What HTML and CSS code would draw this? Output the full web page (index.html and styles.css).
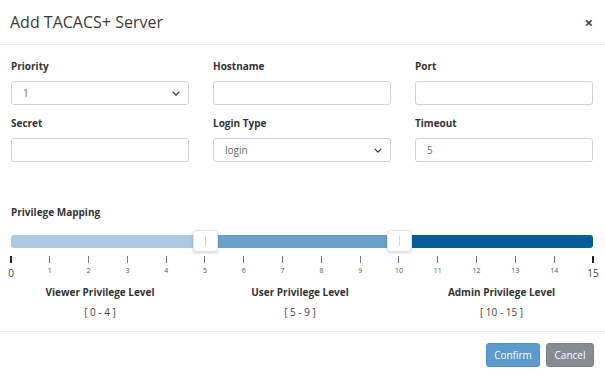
FILE: index.html
```html
<!DOCTYPE html>
<html>
<head>
<meta charset="utf-8">
<link rel="stylesheet" href="styles.css">
</head>
<body>
<div class="modal">
  <div class="modal-header">
    <h4 class="title">Add TACACS+ Server</h4>
    <span class="close">&times;</span>
  </div>
  <div class="modal-body">
    <div class="form-grid">
      <div class="field">
        <label>Priority</label>
        <div class="control select"><span>1</span><svg class="chev" viewBox="0 0 10 6" width="8" height="5"><path d="M1 1 L5 5 L9 1" fill="none" stroke="#333" stroke-width="1.6"/></svg></div>
      </div>
      <div class="field">
        <label>Hostname</label>
        <div class="control"></div>
      </div>
      <div class="field">
        <label>Port</label>
        <div class="control"></div>
      </div>
      <div class="field">
        <label>Secret</label>
        <div class="control"></div>
      </div>
      <div class="field">
        <label>Login Type</label>
        <div class="control select"><span>login</span><svg class="chev" viewBox="0 0 10 6" width="8" height="5"><path d="M1 1 L5 5 L9 1" fill="none" stroke="#333" stroke-width="1.6"/></svg></div>
      </div>
      <div class="field">
        <label>Timeout</label>
        <div class="control"><span>5</span></div>
      </div>
    </div>

    <div class="mapping">
      <label class="map-label">Privilege Mapping</label>
      <div class="slider">
        <div class="track">
          <div class="seg seg-viewer"></div>
          <div class="seg seg-user"></div>
          <div class="seg seg-admin"></div>
        </div>
        <div class="handle" style="left: 33.33%"></div>
        <div class="handle" style="left: 66.67%"></div>
      </div>
      <div class="ticks">
        <div class="tick major"><i></i><b>0</b></div>
        <div class="tick"><i></i><b>1</b></div>
        <div class="tick"><i></i><b>2</b></div>
        <div class="tick"><i></i><b>3</b></div>
        <div class="tick"><i></i><b>4</b></div>
        <div class="tick"><i></i><b>5</b></div>
        <div class="tick"><i></i><b>6</b></div>
        <div class="tick"><i></i><b>7</b></div>
        <div class="tick"><i></i><b>8</b></div>
        <div class="tick"><i></i><b>9</b></div>
        <div class="tick"><i></i><b>10</b></div>
        <div class="tick"><i></i><b>11</b></div>
        <div class="tick"><i></i><b>12</b></div>
        <div class="tick"><i></i><b>13</b></div>
        <div class="tick"><i></i><b>14</b></div>
        <div class="tick major"><i></i><b>15</b></div>
      </div>
      <div class="levels">
        <div class="level"><div class="level-name">Viewer Privilege Level</div><div class="level-range">[ 0 - 4 ]</div></div>
        <div class="level"><div class="level-name">User Privilege Level</div><div class="level-range">[ 5 - 9 ]</div></div>
        <div class="level"><div class="level-name">Admin Privilege Level</div><div class="level-range">[ 10 - 15 ]</div></div>
      </div>
    </div>
  </div>
  <div class="modal-footer">
    <button class="btn btn-primary">Confirm</button>
    <button class="btn btn-secondary">Cancel</button>
  </div>
</div>
</body>
</html>
```
FILE: styles.css
```css
* { box-sizing: border-box; }
html, body { margin: 0; padding: 0; background: #fff; }
body {
  font-family: "Open Sans", "Noto Sans", sans-serif;
  color: #333;
  width: 605px;
  height: 378px;
  overflow: hidden;
}
.modal { width: 605px; }
.modal-header {
  height: 45px;
  border-bottom: 1px solid #e9ecef;
  display: flex;
  align-items: center;
  justify-content: space-between;
  padding: 0 12px 1px 10px;
}
.title {
  margin: 0;
  font-size: 16px;
  font-weight: 400;
  color: #3a3a3a;
}
.close {
  font-size: 15px;
  font-weight: 700;
  color: #444;
  line-height: 1;
  margin-top: 1px;
}
.modal-body { padding: 14px 12px 0 11px; }
.form-grid {
  display: grid;
  grid-template-columns: 178px 178px 178px;
  column-gap: 24px;
  row-gap: 11px;
}
.field label {
  display: block;
  font-size: 10px;
  font-weight: 700;
  color: #333;
  line-height: 14px;
  margin-bottom: 8px;
}
.control {
  height: 24px;
  border: 1px solid #cfd4d9;
  border-radius: 3px;
  display: flex;
  align-items: center;
  justify-content: space-between;
  padding: 0 8px 0 11px;
  font-size: 10px;
  color: #666;
}
.chev { display: block; }
.mapping { margin-top: 43px; }
.map-label {
  display: block;
  font-size: 10px;
  font-weight: 700;
  line-height: 14px;
  color: #333;
}
.slider {
  position: relative;
  margin-top: 16px;
  height: 13px;
  width: 582px;
}
.track {
  display: flex;
  height: 13px;
  border-radius: 3px;
  overflow: hidden;
}
.seg { flex: 1; }
.seg-viewer { background: #abc9e0; }
.seg-user { background: #6aa0c9; }
.seg-admin { background: #045e9b; }
.handle {
  position: absolute;
  top: -5px;
  width: 25px;
  height: 22px;
  margin-left: -12px;
  background: #fff;
  border: 1px solid #e3e6ea;
  border-radius: 4px;
  box-shadow: 0 1px 3px rgba(0,0,0,0.18);
}
.handle::after {
  content: "";
  position: absolute;
  left: 11px;
  top: 5px;
  width: 1px;
  height: 10px;
  background: #d3d6da;
}
.ticks {
  display: flex;
  justify-content: space-between;
  width: 582px;
  margin-top: 8px;
  height: 24px;
}
.tick {
  width: 0;
  display: flex;
  flex-direction: column;
  align-items: center;
}
.tick i {
  display: block;
  width: 1px;
  height: 7px;
  background: #777;
  flex: none;
}
.tick b {
  display: block;
  font-weight: 400;
  font-size: 7px;
  color: #555;
  margin-top: 3px;
  line-height: 9px;
  white-space: nowrap;
}
.tick.major i { width: 2px; background: #222; }
.tick.major b { font-size: 10px; margin-top: 4px; line-height: 12px; color: #444; }
.levels {
  display: grid;
  grid-template-columns: 200px 200px 203px;
  margin-left: -11px;
  margin-top: 5px;
}
.level { text-align: center; }
.level-name {
  font-size: 10px;
  font-weight: 700;
  line-height: 14px;
  color: #333;
}
.level-range {
  font-size: 10px;
  line-height: 14px;
  color: #444;
  margin-top: 6px;
}
.modal-footer {
  margin-top: 12px;
  border-top: 1px solid #e9ecef;
  display: flex;
  justify-content: flex-end;
  gap: 6px;
  padding: 11px 11px 0 0;
}
.btn {
  font-family: inherit;
  font-size: 10px;
  color: #fff;
  height: 24px;
  border-radius: 3px;
  padding: 0 7px;
  border: 1px solid transparent;
}
.btn-primary { background: #5b9bcd; border-color: #5290c2; width: 54px; }
.btn-secondary { background: #858c93; border-color: #7b8289; width: 48px; }
```
